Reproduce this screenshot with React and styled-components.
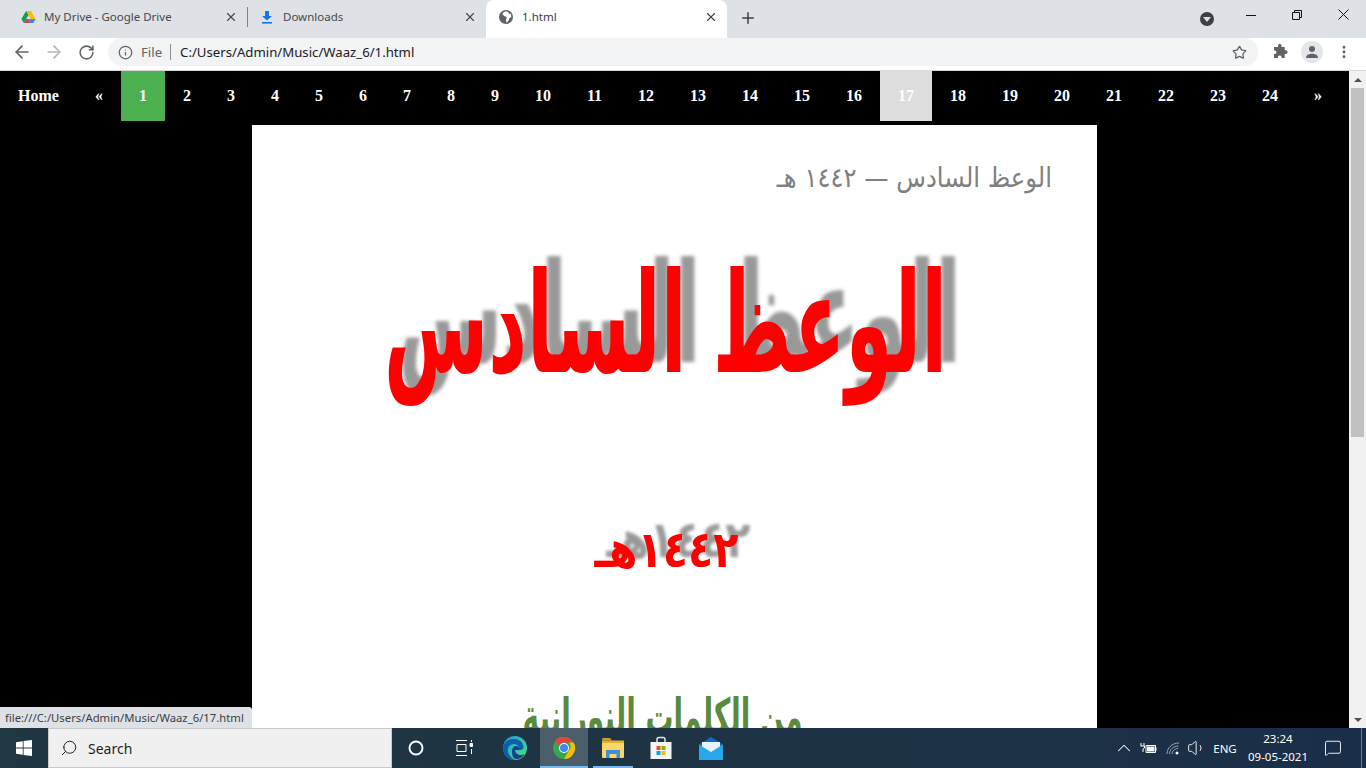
import styled, { createGlobalStyle } from "styled-components";
import {
  ArrowLeft,
  ArrowRight,
  ChevronUp,
  Info,
  MessageSquare,
  MoreVertical,
  Plus,
  RotateCw,
  Search,
  Star,
  Volume1,
  X,
} from "lucide-react";

const GlobalStyle = createGlobalStyle`
  html, body {
    margin: 0;
    padding: 0;
    height: 100%;
    overflow: hidden;
    font-family: "Noto Sans", "Open Sans", sans-serif;
  }
  #root { height: 100%; }
`;

const Screen = styled.div`
  width: 1366px;
  height: 768px;
  display: flex;
  flex-direction: column;
  overflow: hidden;
`;

/* browser chrome */
const TabStrip = styled.div`
  height: 38px;
  flex: none;
  display: flex;
  align-items: stretch;
  background: #dee1e6;
`;

const Tab = styled.div`
  width: ${(p) => p.$width}px;
  flex: none;
  box-sizing: border-box;
  display: flex;
  align-items: center;
  padding: 0 9px 5px ${(p) => p.$pad}px;
  font-size: 11.5px;
  color: ${(p) => (p.$active ? "#3c4043" : "#45494d")};
  background: ${(p) => (p.$active ? "#fff" : "transparent")};
  border-radius: ${(p) => (p.$active ? "8px 8px 0 0" : "0")};
`;

const TabSeparator = styled.div`
  width: 1px;
  height: 20px;
  margin: 7px 0 0;
  background: #7f8286;
  flex: none;
`;

const TabIcon = styled.span`
  width: 16px;
  height: 16px;
  flex: none;
  margin-right: 8px;
  display: flex;
  align-items: center;
  justify-content: center;
`;

const TabTitle = styled.span`
  flex: 1;
  white-space: nowrap;
`;

const NewTab = styled.div`
  width: 42px;
  display: flex;
  align-items: center;
  justify-content: center;
  padding-bottom: 3px;
  color: #3c4043;
`;

const StripSpacer = styled.div`
  flex: 1;
`;

const WindowButton = styled.div`
  width: 46px;
  display: flex;
  align-items: center;
  justify-content: center;
  padding-bottom: 9px;

  svg {
    display: block;
  }
`;

const ProfileDot = styled.div`
  width: 14px;
  height: 14px;
  border-radius: 50%;
  background: #3c4043;
  align-self: center;
  margin: 0 14px 0 0;
  display: flex;
  align-items: center;
  justify-content: center;

  &::after {
    content: "";
    border-left: 4px solid transparent;
    border-right: 4px solid transparent;
    border-top: 5px solid #dee1e6;
    margin-top: 1px;
  }
`;

const Toolbar = styled.div`
  height: 33px;
  flex: none;
  box-sizing: border-box;
  display: flex;
  align-items: center;
  padding: 0 0 4px 6px;
  background: #fff;
  border-bottom: 1px solid #d8d9db;
`;

const NavButton = styled.div`
  width: 32px;
  display: flex;
  align-items: center;
  justify-content: center;
  color: ${(p) => (p.$disabled ? "#b4b6b9" : "#5f6368")};
`;

const Omnibox = styled.div`
  width: 1150px;
  height: 28px;
  margin: 0 6px;
  flex: none;
  box-sizing: border-box;
  display: flex;
  align-items: center;
  padding: 0 11px 0 10px;
  border-radius: 14px;
  background: #f1f3f4;
  font-size: 13.2px;
  color: #202124;
`;

const Scheme = styled.span`
  margin-left: 8px;
  padding-right: 8px;
  color: #5f6368;
  border-right: 1px solid #8b8d90;
  line-height: 16px;
`;

const Url = styled.span`
  margin-left: 9px;
  flex: 1;
`;

const ToolbarButton = styled.div`
  width: 32px;
  display: flex;
  align-items: center;
  justify-content: center;
  color: #5f6368;
`;

const Avatar = styled.div`
  width: 22px;
  height: 22px;
  border-radius: 50%;
  background: #e3e5e8;
  display: flex;
  align-items: center;
  justify-content: center;
`;

/* page */
const Viewport = styled.div`
  flex: 1;
  min-height: 0;
  display: flex;
  position: relative;
`;

const Page = styled.div`
  flex: 1;
  min-width: 0;
  background: #000;
  overflow: hidden;
`;

const PageNav = styled.nav`
  display: flex;
  margin-bottom: 4px;
  font-family: "Liberation Serif", "Times New Roman", serif;
  font-weight: bold;
  font-size: 16px;
  line-height: 18px;
  color: #fff;
`;

const PageLink = styled.a`
  padding: 16px 18px;
  color: #fff;
  background: ${(p) =>
    p.$current ? "#4caf50" : p.$hover ? "#ddd" : "transparent"};
`;

const Article = styled.main`
  width: 845px;
  margin-left: 252px;
  box-sizing: border-box;
  padding: 30px 45px 0;
  background: #fff;
  direction: rtl;
  font-family: "DejaVu Sans", sans-serif;
  font-stretch: condensed;
`;

const RunningHead = styled.div`
  font-size: 27px;
  line-height: 46px;
  color: #808080;
`;

/* the original face is far taller than DejaVu, so headings get stretched upright */
const Title = styled.h1`
  margin: 38px 0 0;
  padding-right: 18px;
  text-align: center;
  font-size: 84px;
  line-height: 170px;
  font-weight: bold;
  color: #ff0000;
  text-shadow: 14px -6px 3px #999;
  transform: scaleY(1.66);
`;

const Year = styled.h2`
  margin: 110px 0 0;
  padding-right: 16px;
  text-align: center;
  font-size: 46px;
  line-height: 60px;
  font-weight: bold;
  color: #ff0000;
  text-shadow: 12px -9px 3px #999;
  transform: scaleY(1.1);
`;

const Subtitle = styled.h2`
  margin: 97px 0 0;
  padding-right: 24px;
  text-align: center;
  font-size: 31px;
  line-height: 80px;
  font-weight: bold;
  color: #5a8a3c;
  transform: scaleY(1.6);
`;

const StatusBubble = styled.div`
  position: absolute;
  left: 0;
  bottom: 0;
  height: 21px;
  width: 252px;
  box-sizing: border-box;
  padding: 3px 0 0 5px;
  background: #dee1e6;
  border-top-right-radius: 3px;
  font-size: 11.3px;
  line-height: 15px;
  color: #3c4043;
  white-space: nowrap;
`;

const Scrollbar = styled.div`
  width: 17px;
  flex: none;
  display: flex;
  flex-direction: column;
  align-items: center;
  background: #f1f1f1;
`;

const ScrollArrow = styled.div`
  height: 17px;
  flex: none;
  display: flex;
  align-items: center;
  justify-content: center;

  &::after {
    content: "";
    border-left: 4px solid transparent;
    border-right: 4px solid transparent;
    ${(p) => (p.$down ? "border-top" : "border-bottom")}: 4px solid #505050;
  }
`;

const ScrollThumb = styled.div`
  width: 13px;
  height: 349px;
  background: #c1c1c1;
`;

const ScrollGap = styled.div`
  flex: 1;
`;

/* windows taskbar */
const Taskbar = styled.footer`
  height: 40px;
  flex: none;
  display: flex;
  align-items: stretch;
  background: linear-gradient(90deg, #1f3742 0%, #1e3344 50%, #1b2e48 100%);
  color: #fff;
`;

const StartButton = styled.div`
  width: 48px;
  flex: none;
  display: flex;
  align-items: center;
  justify-content: center;
`;

const SearchBox = styled.div`
  width: 344px;
  flex: none;
  box-sizing: border-box;
  display: flex;
  align-items: center;
  gap: 10px;
  padding-left: 11px;
  background: #f0f0f0;
  border: 1px solid #c6c8ca;
  font-size: 14px;
  color: #1f1f1f;

  svg {
    transform: scaleX(-1);
  }
`;

const TaskSlot = styled.div`
  width: 48px;
  margin-left: ${(p) => p.$offset || 0}px;
  flex: none;
  box-sizing: border-box;
  display: flex;
  align-items: center;
  justify-content: center;
  background: ${(p) => (p.$active ? "#4a5d68" : "transparent")};
  position: relative;

  &::after {
    content: "";
    display: ${(p) => (p.$open ? "block" : "none")};
    position: absolute;
    left: ${(p) => (p.$active ? 0 : 4)}px;
    right: ${(p) => (p.$active ? 0 : 4)}px;
    bottom: 0;
    height: 2px;
    background: #76b9ed;
  }
`;

const Tray = styled.div`
  margin-left: auto;
  display: flex;
  align-items: center;
  font-size: 12px;
  color: #fff;
`;

const TrayIcon = styled.div`
  width: ${(p) => p.$width}px;
  flex: none;
  display: flex;
  align-items: center;
  justify-content: center;
`;

const Lang = styled.span`
  width: 30px;
  margin-left: 2px;
  text-align: center;
  font-size: 11.5px;
`;

const Clock = styled.div`
  width: 72px;
  margin-left: 2px;
  text-align: center;
  font-size: 11.5px;
  line-height: 18px;
`;

const NotifyButton = styled.div`
  width: 38px;
  margin-right: 9px;
  display: flex;
  align-items: center;
  justify-content: center;
`;

const ShowDesktop = styled.div`
  width: 5px;
  height: 100%;
  flex: none;
  box-sizing: border-box;
  border-left: 1px solid #6b7a8a;
`;

const DriveLogo = () => (
  <svg width="15" height="14" viewBox="0 0 16 15">
    <path d="M5.400 1h5.200l5 8.600h-5.200z" fill="#fbbc04" />
    <path d="M5.400 1 .4 9.600 3 14l5-8.600z" fill="#0f9d58" />
    <path d="M3 14h10.200l2.400-4.400H5.500z" fill="#4285f4" />
    <path d="M3 14h6l-1.400-4.400H5.500z" fill="#ea4335" opacity="0.9" />
  </svg>
);

const DownloadIcon = () => (
  <svg width="12" height="14" viewBox="0 0 12 14">
    <path d="M4 1h4v5h3L6 10.500 1 6h3z" fill="#1a73e8" />
    <rect x="1" y="12" width="10" height="1.600" fill="#1a73e8" />
  </svg>
);

const GlobeIcon = () => (
  <svg width="16" height="16" viewBox="0 0 16 16">
    <circle cx="8" cy="8" r="7" fill="#5f6368" />
    <path
      d="M8 2.200 5 3.500l-.5 2 2 1.800 1.600.2.6 1.500L8 11l.5 2.700 2.200-2.200.6-2.300 2-1.200L13 5l-2-.3-.7-1.700z"
      fill="#fff"
    />
  </svg>
);

const MinimizeIcon = () => (
  <svg width="10" height="10" viewBox="0 0 10 10">
    <path d="M0 5.500h10" stroke="#111" />
  </svg>
);

const RestoreIcon = () => (
  <svg width="10" height="10" viewBox="0 0 10 10" fill="none" stroke="#111">
    <path d="M.5 2.500h7v7h-7zM2.500 2.500v-2h7v7h-2" />
  </svg>
);

const CloseIcon = () => (
  <svg width="11" height="11" viewBox="0 0 11 11" fill="none" stroke="#111">
    <path d="M.5.500l10 10M10.500.500l-10 10" />
  </svg>
);

const PuzzleIcon = () => (
  <svg width="16" height="16" viewBox="0 0 16 16">
    <path
      d="M6 1.500a1.800 1.800 0 0 1 3.500 0V3h3.200v3.200h1a1.900 1.900 0 0 1 0 3.800h-1v4H9.600v-1a1.900 1.900 0 0 0-3.700 0v1H2v-3.900h1a1.900 1.900 0 0 0 0-3.700H2V3h4z"
      fill="#5f6368"
    />
  </svg>
);

const PersonIcon = () => (
  <svg width="14" height="14" viewBox="0 0 14 14">
    <circle cx="7" cy="4" r="3" fill="#5f6368" />
    <path d="M1 13c0-3 3-4.300 6-4.300s6 1.300 6 4.300z" fill="#5f6368" />
  </svg>
);

const WindowsLogo = () => (
  <svg width="16" height="16" viewBox="0 0 16 16">
    <path d="M0 2.200 6.800 1.200v6.400H0zM7.600 1.100 16 0v7.600H7.600zM0 8.400h6.800v6.400L0 13.800zM7.600 8.400H16V16l-8.400-1.100z" fill="#fff" />
  </svg>
);

const TaskViewIcon = () => (
  <svg width="17" height="16" viewBox="0 0 17 16" fill="none" stroke="#fff" strokeWidth="1">
    <path d="M0 .5h11M0 15.500h11M1 4.500h9v7H1z" />
    <path d="M14 3.500h2.500v3H14z" fill="#fff" />
    <path d="M15.500 0v2M15.500 9v5" />
  </svg>
);

const EdgeLogo = () => (
  <svg width="24" height="24" viewBox="0 0 24 24">
    <defs>
      <linearGradient id="edgeTop" x1="0" y1="0" x2="1" y2="1">
        <stop offset="0" stopColor="#1b9de2" />
        <stop offset="1" stopColor="#4fe07a" />
      </linearGradient>
    </defs>
    <circle cx="12" cy="12" r="12" fill="url(#edgeTop)" />
    <path d="M0 12C1 5 6 3 11 3c5 0 9 3 9.500 7.500.3 2.500-2 3.500-4.500 3.500 1-3-1.500-6-5-6-4 0-7 3-6 8 .6 3 3 6 7 7.800C5 24.500 0 19 0 12z" fill="#0c5fa8" />
    <path d="M9 15c0-3 2-5 4-5 1.500 0 3 1 3.500 2.500.3 1-.5 1.500-2.500 1.500h-2c0 3 3 5 6 5 1.200 0 2.500-.3 3.500-1-1.500 3-5 5-8 5-4 0-4.500-5-4.500-8z" fill="#1b3f8f" />
  </svg>
);

const ChromeLogo = () => (
  <svg width="22" height="22" viewBox="0 0 22 22">
    <circle cx="11" cy="11" r="11" fill="#34a853" />
    <path d="M11 0a11 11 0 0 1 9.530 5.500H11A5.500 5.500 0 0 0 5.900 9L2 3.300A11 11 0 0 1 11 0z" fill="#ea4335" />
    <path d="M20.530 5.500A11 11 0 0 1 11 22l4.700-8.200a5.500 5.500 0 0 0 .1-8.300z" fill="#fbbc04" />
    <circle cx="11" cy="11" r="5" fill="#fff" />
    <circle cx="11" cy="11" r="4" fill="#4285f4" />
  </svg>
);

const ExplorerLogo = () => (
  <svg width="22" height="20" viewBox="0 0 22 20">
    <path d="M0 1.500A1.500 1.500 0 0 1 1.500 0H8l2 2.500H0z" fill="#d69a1f" />
    <rect y="2.500" width="22" height="4" fill="#e6b02c" />
    <rect y="5" width="22" height="15" rx="1" fill="#fcd669" />
    <path d="M4 12h14v8h-3.500v-4h-7v4H4z" fill="#3d8fd6" />
  </svg>
);

const StoreLogo = () => (
  <svg width="24" height="24" viewBox="0 0 24 24">
    <path d="M8 7V3.500A2 2 0 0 1 10 1.500h4a2 2 0 0 1 2 2V7" fill="none" stroke="#dfe3e6" strokeWidth="1.500" />
    <path d="M1.500 6h21v17h-21z" fill="#f3f4f5" />
    <rect x="7.500" y="10" width="4" height="4" fill="#f25022" />
    <rect x="12.500" y="10" width="4" height="4" fill="#7fba00" />
    <rect x="7.500" y="15" width="4" height="4" fill="#00a4ef" />
    <rect x="12.500" y="15" width="4" height="4" fill="#ffb900" />
  </svg>
);

const MailLogo = () => (
  <svg width="24" height="23" viewBox="0 0 24 23">
    <path d="M0 7.500 12 0l12 7.500V22H0z" fill="#0a6fc2" />
    <path d="M3 5h18v10H3z" fill="#e8f2fa" />
    <path d="M0 7.500 12 15 24 7.500V23H0z" fill="#28a8ea" />
  </svg>
);

const BatteryIcon = () => (
  <svg width="17" height="12" viewBox="0 0 17 12" fill="none" stroke="#fff">
    <path d="M6 3.500h9.500v7H6zM16 5.500v3" />
    <rect x="7" y="4.500" width="7.500" height="5" fill="#fff" stroke="none" />
    <path d="M1 1v3M4 1v3M.5 4h4v2L3 7v3" />
  </svg>
);

const WifiIcon = () => (
  <svg width="14" height="13" viewBox="0 0 14 13" fill="none" stroke="#9aa5b0" strokeWidth="1">
    <path d="M1 12C1 6 6 1 13 1M3.500 12c0-4.500 4-8 9-8M6 12c0-3 3-5.500 6-5.500" />
    <circle cx="11" cy="11" r="1.500" fill="#fff" stroke="none" />
  </svg>
);

const pages = Array.from({ length: 24 }, (_, i) => i + 1);

const App = () => {
  return (
    <Screen>
      <GlobalStyle />
      <TabStrip>
        <Tab $width={247} $pad={20}>
          <TabIcon>
            <DriveLogo />
          </TabIcon>
          <TabTitle>My Drive - Google Drive</TabTitle>
          <X size={14} strokeWidth={2} color="#45494d" />
        </Tab>
        <TabSeparator />
        <Tab $width={238} $pad={11}>
          <TabIcon>
            <DownloadIcon />
          </TabIcon>
          <TabTitle>Downloads</TabTitle>
          <X size={14} strokeWidth={2} color="#45494d" />
        </Tab>
        <Tab $width={241} $pad={12} $active>
          <TabIcon>
            <GlobeIcon />
          </TabIcon>
          <TabTitle>1.html</TabTitle>
          <X size={14} strokeWidth={2} color="#45494d" />
        </Tab>
        <NewTab>
          <Plus size={18} strokeWidth={2} />
        </NewTab>
        <StripSpacer />
        <ProfileDot />
        <WindowButton>
          <MinimizeIcon />
        </WindowButton>
        <WindowButton>
          <RestoreIcon />
        </WindowButton>
        <WindowButton>
          <CloseIcon />
        </WindowButton>
      </TabStrip>

      <Toolbar>
        <NavButton>
          <ArrowLeft size={20} strokeWidth={2} />
        </NavButton>
        <NavButton $disabled>
          <ArrowRight size={20} strokeWidth={2} />
        </NavButton>
        <NavButton>
          <RotateCw size={17} strokeWidth={2.2} />
        </NavButton>
        <Omnibox>
          <Info size={15} strokeWidth={2} color="#5f6368" />
          <Scheme>File</Scheme>
          <Url>C:/Users/Admin/Music/Waaz_6/1.html</Url>
          <Star size={15} strokeWidth={2} color="#5f6368" />
        </Omnibox>
        <ToolbarButton>
          <PuzzleIcon />
        </ToolbarButton>
        <ToolbarButton>
          <Avatar>
            <PersonIcon />
          </Avatar>
        </ToolbarButton>
        <ToolbarButton>
          <MoreVertical size={16} strokeWidth={2.4} />
        </ToolbarButton>
      </Toolbar>

      <Viewport>
        <Page>
          <PageNav>
            <PageLink>Home</PageLink>
            <PageLink>«</PageLink>
            {pages.map((n) => (
              <PageLink key={n} $current={n === 1} $hover={n === 17}>
                {n}
              </PageLink>
            ))}
            <PageLink>»</PageLink>
          </PageNav>
          <Article>
            <RunningHead>الوعظ السادس — ١٤٤٢ هـ</RunningHead>
            <Title>الوعظ السادس</Title>
            <Year>١٤٤٢هـ</Year>
            <Subtitle>من الكلمات النورانية</Subtitle>
          </Article>
        </Page>
        <Scrollbar>
          <ScrollArrow />
          <ScrollThumb />
          <ScrollGap />
          <ScrollArrow $down />
        </Scrollbar>
        <StatusBubble>file:///C:/Users/Admin/Music/Waaz_6/17.html</StatusBubble>
      </Viewport>

      <Taskbar>
        <StartButton>
          <WindowsLogo />
        </StartButton>
        <SearchBox>
          <Search size={18} strokeWidth={1.3} color="#1f1f1f" />
          Search
        </SearchBox>
        <TaskSlot>
          <svg width="16" height="16" viewBox="0 0 16 16" fill="none" stroke="#fff" strokeWidth="2">
            <circle cx="8" cy="8" r="6.500" />
          </svg>
        </TaskSlot>
        <TaskSlot>
          <TaskViewIcon />
        </TaskSlot>
        <TaskSlot $offset={3}>
          <EdgeLogo />
        </TaskSlot>
        <TaskSlot $active $open $offset={1}>
          <ChromeLogo />
        </TaskSlot>
        <TaskSlot $open $offset={1}>
          <ExplorerLogo />
        </TaskSlot>
        <TaskSlot>
          <StoreLogo />
        </TaskSlot>
        <TaskSlot $offset={2}>
          <MailLogo />
        </TaskSlot>
        <Tray>
          <TrayIcon $width={24}>
            <ChevronUp size={22} strokeWidth={1.1} />
          </TrayIcon>
          <TrayIcon $width={24}>
            <BatteryIcon />
          </TrayIcon>
          <TrayIcon $width={26}>
            <WifiIcon />
          </TrayIcon>
          <TrayIcon $width={22}>
            <Volume1 size={20} strokeWidth={1.1} />
          </TrayIcon>
          <Lang>ENG</Lang>
          <Clock>
            23:24
            <br />
            09-05-2021
          </Clock>
          <NotifyButton>
            <MessageSquare size={18} strokeWidth={1.2} />
          </NotifyButton>
          <ShowDesktop />
        </Tray>
      </Taskbar>
    </Screen>
  );
};

export default App;
